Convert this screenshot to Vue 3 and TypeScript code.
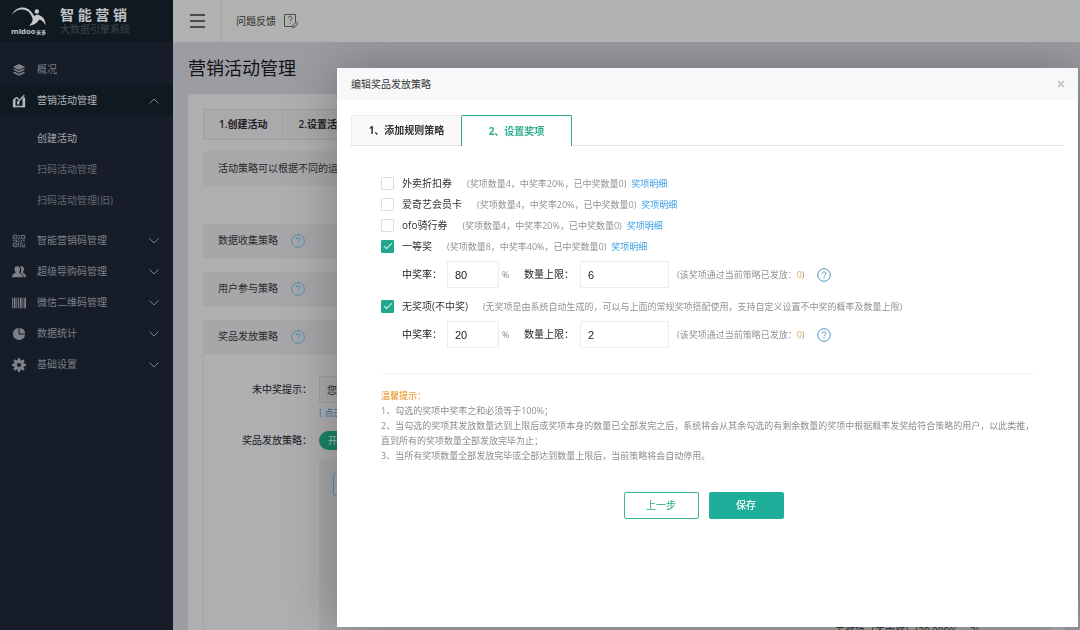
<script setup lang="ts">
import { ref } from 'vue'

interface MenuItem {
  label: string
  icon: string
  active?: boolean
  children?: string[]
}

interface Prize {
  id: string
  name: string
  note: string
  detail: boolean
  checked: boolean
  rate?: string
  limit?: string
}

const menu: MenuItem[] = [
  { label: '概况', icon: 'layers' },
  {
    label: '营销活动管理',
    icon: 'chart',
    active: true,
    children: ['创建活动', '扫码活动管理', '扫码活动管理(旧)'],
  },
  { label: '智能营销码管理', icon: 'qr', children: [] },
  { label: '超级导购码管理', icon: 'users', children: [] },
  { label: '微信二维码管理', icon: 'barcode', children: [] },
  { label: '数据统计', icon: 'pie', children: [] },
  { label: '基础设置', icon: 'gear', children: [] },
]

const prizes = ref<Prize[]>([
  { id: 'p1', name: '外卖折扣券', note: '(奖项数量4，中奖率20%，已中奖数量0)', detail: true, checked: false },
  { id: 'p2', name: '爱奇艺会员卡', note: '(奖项数量4，中奖率20%，已中奖数量0)', detail: true, checked: false },
  { id: 'p3', name: 'ofo骑行券', note: '(奖项数量4，中奖率20%，已中奖数量0)', detail: true, checked: false },
  { id: 'p4', name: '一等奖', note: '(奖项数量8，中奖率40%，已中奖数量0)', detail: true, checked: true, rate: '80', limit: '6' },
  {
    id: 'p5',
    name: '无奖项(不中奖)',
    note: '(无奖项是由系统自动生成的，可以与上面的常规奖项搭配使用，支持自定义设置不中奖的概率及数量上限)',
    detail: false,
    checked: true,
    rate: '20',
    limit: '2',
  },
])

const tips: string[] = [
  '1、勾选的奖项中奖率之和必须等于100%；',
  '2、当勾选的奖项其发放数量达到上限后或奖项本身的数量已全部发完之后，系统将会从其余勾选的有剩余数量的奖项中根据概率发奖给符合策略的用户，以此类推，直到所有的奖项数量全部发放完毕为止；',
  '3、当所有奖项数量全部发放完毕或全部达到数量上限后，当前策略将会自动停用。',
]

const missText = ref('您没有中奖')
</script>

<template>
  <div class="app">
    <aside class="sidebar">
      <div class="brand">
        <svg class="logo" viewBox="0 0 38 30" role="img" aria-label="midoo">
          <path d="M1 8.500C3.500 3.500 8 .9 12.500 1.200 18.500 1.600 21.500 6 24 10c1.300-1.300 3.200-1.700 5.200-.9 4 1.500 6.500 5.500 6.300 10.400-1.500-3-3.800-5.300-6.500-6-1.800 3.500-5.500 6-10.500 6.300 2.500-2 3.900-4.300 3.700-7C20.500 7 17 3.500 11.500 3.300 7.500 3.200 4 5 1 8.500z" fill="#c6c9cc" />
          <circle cx="26.500" cy="5.200" r="2.300" fill="#c6c9cc" />
          <text x="0" y="28" class="logo-en">midoo</text>
          <text x="26" y="28" class="logo-cn">米多</text>
        </svg>
        <div class="brand-text">
          <strong>智 能 营 销</strong>
          <span>大数据引擎系统</span>
        </div>
      </div>
      <nav class="menu">
        <template v-for="item in menu" :key="item.label">
          <a href="#" class="menu-item" :class="{ active: item.active }">
            <svg class="menu-icon" viewBox="0 0 16 16" fill="currentColor">
              <template v-if="item.icon === 'layers'">
                <path d="M8 1l7 3.500-7 3.500-7-3.500z" />
                <path d="M1 7.500l2-1 5 2.600 5-2.600 2 1L8 11z" />
                <path d="M1 11l2-1 5 2.600L13 10l2 1-7 3.700z" />
              </template>
              <template v-else-if="item.icon === 'chart'">
                <path d="M1 6.500l3-2.200V15H1zM5.800 8h2.700v4H5.800zM12 4h3v11h-3z" />
                <path d="M2.500 6L5.500 4l3 3.500L14 1.500M1.500 14.300h13" fill="none" stroke="currentColor" stroke-width="1.500" />
              </template>
              <template v-else-if="item.icon === 'qr'">
                <path d="M1.500 1.500h4v4h-4zM10.500 1.500h4v4h-4zM1.500 10.500h4v4h-4z" fill="none" stroke="currentColor" />
                <path d="M3 3h1v1H3zM12 3h1v1h-1zM3 12h1v1H3zM7 1h2v1H7zM8 3h1v2H8zM7 5h1v2H7zM1 7h2v1H1zM4 7h2v2H4zM7 8h2v1H7zM10 7h1v2h-1zM12 7h3v1h-3zM13 9h1v1h-1zM7 10h1v3H7zM9 10h3v1H9zM9 12h1v3H9zM11 12h2v1h-2zM14 11h1v2h-1zM11 14h4v1h-4zM7 14h1v1H7z" />
              </template>
              <template v-else-if="item.icon === 'users'">
                <path d="M6 1.500c2.200 0 3.200 1.500 3.200 3.300S8 8 8 8.700c0 .9 4.300 1.300 4.300 5.300H0c0-4 4-4.400 4-5.300 0-.7-1.200-2.100-1.200-3.900S3.800 1.500 6 1.500z" />
                <path d="M9 1.800c3-1 4.700.7 4.700 3 0 1.800-1.200 3-1.200 3.700 0 .9 3.500 1.200 3.500 5.500h-2.700c-.2-3-1.800-4.200-3.600-5.200.8-1.700 1.600-5-.7-7z" />
              </template>
              <template v-else-if="item.icon === 'barcode'">
                <path d="M0 2h1v12H0zM2 2h2v12H2zM5 2h1v12H5zM7 2h1v12H7zM9 2h2v12H9zM12 2h1v12h-1zM14 2h2v12h-2z" />
              </template>
              <template v-else-if="item.icon === 'pie'">
                <path d="M7.500 1v7.500H15A7 7 0 1 1 7.500 1z" />
                <path d="M8.700 1A6.500 6.500 0 0 1 15 7.300H8.700z" />
              </template>
              <template v-else>
                <path fill-rule="evenodd" d="M6.800 0h2.400l.4 2.300 1.200.5 1.900-1.300 1.800 1.800-1.300 1.900.5 1.200 2.300.4v2.400l-2.300.4-.5 1.200 1.300 1.900-1.800 1.800-1.900-1.300-1.200.5-.4 2.300H6.800l-.4-2.300-1.200-.5-1.900 1.300-1.800-1.800 1.300-1.900-.5-1.200L0 9.200V6.800l2.300-.4.5-1.200-1.300-1.900 1.800-1.800 1.900 1.300 1.200-.5zM8 5.600a2.400 2.400 0 1 0 0 4.800 2.400 2.400 0 0 0 0-4.800z" />
              </template>
            </svg>
            <span>{{ item.label }}</span>
            <svg v-if="item.children" class="chevron" viewBox="0 0 10 6">
              <path :d="item.active ? 'M.5 5.500L5 1l4.500 4.500' : 'M.5 .5L5 5l4.500-4.500'" />
            </svg>
          </a>
          <div v-if="item.children && item.children.length" class="submenu">
            <a v-for="(child, i) in item.children" :key="child" href="#" :class="{ current: i === 0 }">{{ child }}</a>
          </div>
        </template>
      </nav>
    </aside>

    <div class="page">
      <header class="topbar">
        <button type="button" class="burger" aria-label="菜单"><i></i><i></i><i></i></button>
        <a href="#" class="feedback">
          问题反馈
          <svg viewBox="0 0 16 16" fill="none" stroke="#4b4c4b">
            <path d="M9 13.500H1.500v-12h11V9" />
            <path d="M5.200 5.200c0-2.300 3.800-2.200 3.800 0 0 1.400-1.900 1.400-1.900 3M7.100 9.600v1.200" />
            <path d="M10 12.500l3-3.500 1.800 1.500-3 3.500-2.200.8z" />
          </svg>
        </a>
      </header>
      <h1>营销活动管理</h1>
      <main class="card">
        <ol class="steps">
          <li>1.创建活动</li>
          <li>2.设置活动策略</li>
        </ol>
        <p class="notice">活动策略可以根据不同的运营需求进行设置</p>
        <section v-for="name in ['数据收集策略', '用户参与策略', '奖品发放策略']" :key="name" class="panel">
          <h2>
            {{ name }}
            <svg class="help" viewBox="0 0 14 14"><circle cx="7" cy="7" r="6.300" /><path d="M5.200 5.600c0-2.500 3.700-2.400 3.700 0 0 1.300-1.800 1.400-1.800 2.800M7.100 9.400v1.200" /></svg>
          </h2>
          <div v-if="name === '奖品发放策略'" class="panel-body">
            <label for="miss">未中奖提示：</label>
            <div>
              <input id="miss" v-model="missText" type="text" class="miss" />
              <a href="#" class="preview">[ 点击预览 ]</a>
            </div>
            <span class="row-label">奖品发放策略：</span>
            <button type="button" class="switch">开启</button>
            <div class="rules">
              <div class="rule"></div>
              <p>无奖项（不中奖）(20.000%， 2)</p>
            </div>
          </div>
        </section>
      </main>
    </div>

    <div class="dialog" role="dialog" aria-labelledby="dialog-title">
      <header class="dialog-head">
        <h2 id="dialog-title">编辑奖品发放策略</h2>
        <button type="button" class="close" aria-label="关闭">
          <svg viewBox="0 0 8 8"><path d="M1 1l6 6M7 1L1 7" /></svg>
        </button>
      </header>
      <div class="tabs" role="tablist">
        <button type="button" role="tab" aria-selected="false">1、添加规则策略</button>
        <button type="button" role="tab" aria-selected="true" class="selected">2、设置奖项</button>
      </div>
      <form class="form" @submit.prevent>
        <div v-for="p in prizes" :key="p.id" class="prize">
          <div class="prize-line">
            <input :id="p.id" v-model="p.checked" type="checkbox" />
            <label :for="p.id">{{ p.name }}</label>
            <span class="note">{{ p.note }}</span>
            <a v-if="p.detail" href="#">奖项明细</a>
          </div>
          <div v-if="p.rate" class="fields">
            <label :for="p.id + '-rate'">中奖率：</label>
            <input :id="p.id + '-rate'" v-model="p.rate" type="text" class="rate" />
            <span class="percent">%</span>
            <label :for="p.id + '-limit'" class="limit-label">数量上限：</label>
            <input :id="p.id + '-limit'" v-model="p.limit" type="text" class="limit" />
            <span class="sent">(该奖项通过当前策略已发放：<em>0</em>)</span>
            <svg class="help" viewBox="0 0 14 14"><circle cx="7" cy="7" r="6.300" /><path d="M5.200 5.600c0-2.500 3.700-2.400 3.700 0 0 1.300-1.800 1.400-1.800 2.800M7.100 9.400v1.200" /></svg>
          </div>
        </div>
        <div class="tips">
          <strong>温馨提示：</strong>
          <p v-for="tip in tips" :key="tip">{{ tip }}</p>
        </div>
        <div class="actions">
          <button type="button">上一步</button>
          <button type="submit" class="primary">保存</button>
        </div>
      </form>
    </div>
  </div>
</template>

<style>
body {
  margin: 0;
  overflow: hidden;
}
</style>

<style scoped>
.app {
  display: flex;
  height: 100vh;
  overflow: hidden;
  background: #9c9ca3;
  color: #29292b;
  font: 10px/15px "Open Sans", "Noto Sans CJK SC", sans-serif;
}
.app * {
  box-sizing: border-box;
}
h1, h2, p, ol {
  margin: 0;
  padding: 0;
  font-weight: 400;
}
a {
  text-decoration: none;
}
button, input {
  margin: 0;
  font: inherit;
}
svg {
  flex: none;
}

.sidebar {
  position: relative;
  z-index: 2;
  flex: none;
  width: 173px;
  background: #171d28;
}
.brand {
  display: flex;
  align-items: center;
  gap: 12px;
  height: 42px;
  padding-left: 11px;
  background: #101920;
}
.logo {
  width: 37px;
  height: 30px;
}
.logo-en {
  fill: #c6c9cc;
  font: bold 8px "Open Sans", sans-serif;
}
.logo-cn {
  fill: #c6c9cc;
  font: bold 5px "Noto Sans CJK SC", sans-serif;
}
.brand-text strong,
.brand-text span {
  display: block;
  white-space: nowrap;
}
.brand-text strong {
  color: #c0c4c7;
  font-size: 14px;
  line-height: 16px;
}
.brand-text span {
  color: #3a434a;
  line-height: 13px;
}
.menu {
  padding-top: 12px;
}
.menu-item {
  display: flex;
  align-items: center;
  height: 31px;
  padding: 0 14px 0 12px;
  color: #7c8087;
}
.menu-item.active {
  background: #101821;
  color: #b3b6ba;
}
.menu-icon {
  width: 14px;
  height: 14px;
  margin-right: 11px;
}
.chevron {
  width: 10px;
  height: 6px;
  margin-left: auto;
  fill: none;
  stroke: #7c8087;
}
.submenu {
  padding: 7px 0 9px 37px;
}
.submenu a {
  display: block;
  color: #62676f;
  line-height: 31px;
}
.submenu .current {
  color: #a6a9ae;
}

.page {
  flex: 1;
  min-width: 0;
}
.topbar {
  position: relative;
  z-index: 2;
  display: flex;
  height: 42px;
  background: #b0b2af;
}
.burger {
  display: flex;
  flex-direction: column;
  justify-content: center;
  gap: 4px;
  width: 49px;
  padding: 0 16px 0 17px;
  border: 0;
  border-right: 1px solid #a5a7a5;
  background: none;
}
.burger i {
  height: 2px;
  background: #4a4b4a;
}
.feedback {
  display: flex;
  align-items: center;
  gap: 7px;
  padding-left: 14px;
  color: #2c2d2d;
}
.feedback svg {
  width: 16px;
  height: 16px;
}
h1 {
  padding: 13px 15px;
  color: #111113;
  font-size: 18px;
  line-height: 26px;
}
.card {
  height: 100%;
  margin: 0 15px;
  padding: 15px;
  border-radius: 3px;
  background: #afafb1;
}
.steps {
  display: flex;
  height: 31px;
  border: 1px solid #a0a0a2;
  background: #aaaaac;
  color: #202022;
  line-height: 29px;
  list-style: none;
}
.steps li {
  padding: 0 15px;
  border-right: 1px solid #a0a0a2;
  font-weight: 600;
}
.notice {
  margin: 11px 0 38px;
  padding: 0 15px;
  background: #a8a8aa;
  line-height: 35px;
}
.panel {
  margin-bottom: 14px;
}
.panel h2 {
  display: flex;
  align-items: center;
  gap: 13px;
  height: 34px;
  padding: 0 15px;
  border-bottom: 1px solid #a2a2a4;
  background: #a7a7a9;
  font-size: 10px;
}
.help {
  width: 14px;
  height: 14px;
  fill: none;
  stroke: #4a8fb8;
}
.panel-body {
  display: grid;
  grid-template-columns: 108px 1fr;
  column-gap: 7px;
  align-items: start;
  height: 400px;
  padding-top: 22px;
  border-left: 1px solid #a2a2a4;
}
.panel-body label,
.row-label {
  color: #161618;
  line-height: 27px;
  text-align: right;
}
.row-label {
  line-height: 19px;
}
.miss {
  display: block;
  width: 260px;
  height: 27px;
  padding: 0 7px;
  border: 1px solid #a0a0a2;
  background: #ababad;
  color: #29292b;
}
.preview {
  display: block;
  margin: 2px 0 11px;
  color: #396f9c;
  font-size: 9px;
}
.switch {
  width: 48px;
  height: 19px;
  padding: 0 0 0 9px;
  border: 0;
  border-radius: 10px;
  background: #1b8369;
  color: #a9c7be;
  font-size: 9px;
  text-align: left;
}
.rules {
  grid-column: 2;
  height: 300px;
  margin-top: 9px;
  padding: 14px;
  background: #a8a8aa;
}
.rule {
  height: 23px;
  border: 1px solid #5093bb;
  border-radius: 2px;
}
.rules p {
  padding: 128px 0 0 502px;
}

.dialog {
  position: fixed;
  inset: 68px 2px 3px 337px;
  z-index: 1;
  overflow: auto;
  background: #fff;
  box-shadow: 1px 1px 50px rgba(0, 0, 0, 0.3);
}
.dialog-head {
  display: flex;
  align-items: center;
  justify-content: space-between;
  height: 32px;
  padding: 0 13px 0 14px;
  background: #f7f8fa;
}
.dialog-head h2 {
  color: #333;
  font-size: 10px;
}
.close {
  display: flex;
  padding: 0;
  border: 0;
  background: none;
}
.close svg {
  width: 8px;
  height: 8px;
  stroke: #bcbcbf;
  stroke-width: 1.500;
}
.tabs {
  display: flex;
  margin: 15px 14px 0;
  border-bottom: 1px solid #e4e6e8;
}
.tabs button {
  width: 110px;
  height: 30px;
  padding: 0;
  border: 1px solid #ececf0;
  border-width: 1px 0 0 1px;
  background: #f9f9fb;
  color: #333;
  font-weight: 700;
}
.tabs .selected {
  width: 111px;
  height: 31px;
  margin-bottom: -1px;
  border: 1px solid #2fa88c;
  border-bottom: 0;
  border-radius: 2px 2px 0 0;
  background: #fff;
  color: #2fac90;
}
.form {
  padding: 27px 43px 29px 44px;
}
.prize-line {
  display: flex;
  align-items: center;
  height: 21px;
  white-space: nowrap;
}
.prize-line input {
  display: grid;
  place-items: center;
  width: 13px;
  height: 13px;
  border: 1px solid #dcdce2;
  border-radius: 1px;
  background: #fff;
  appearance: none;
}
.prize-line input:checked {
  border-color: #22a68e;
  background: #22a68e;
}
.prize-line input:checked::after {
  width: 7px;
  height: 3px;
  margin-bottom: 3px;
  border: solid #d6fff6;
  border-width: 0 0 1px 1px;
  content: "";
  transform: rotate(-45deg);
}
.prize-line label {
  margin: 0 15px 0 8px;
  color: #333;
}
.note {
  color: #929296;
  font-size: 9px;
}
.prize-line a {
  margin-left: 5px;
  color: #3a9fe8;
  font-size: 9px;
}
.fields {
  display: flex;
  align-items: center;
  margin: 4px 0 8px 21px;
}
.fields label {
  width: 45px;
  color: #222;
}
.fields .limit-label {
  width: 56px;
  margin-left: 13px;
}
.fields input {
  width: 52px;
  height: 27px;
  padding: 0 7px;
  border: 1px solid #ebebf1;
  border-radius: 1px;
  background: #fff;
  color: #222;
  font: 11px "Liberation Sans", sans-serif;
}
.fields .limit {
  width: 89px;
}
.percent {
  width: 9px;
  margin-left: 3px;
  color: #8a8a8e;
  font-size: 9px;
}
.sent {
  margin: 0 13px 0 8px;
  color: #929296;
  font-size: 9px;
}
.sent em {
  color: #e0a94b;
  font-style: normal;
}
.tips {
  margin-top: 25px;
  padding-top: 14px;
  border-top: 1px solid #f3f2f6;
  color: #8c8c90;
  font-size: 9px;
}
.tips strong {
  display: block;
  color: #eca23e;
  font-weight: 500;
}
.actions {
  display: flex;
  justify-content: center;
  gap: 10px;
  margin-top: 29px;
  padding-right: 9px;
}
.actions button {
  width: 75px;
  height: 27px;
  padding: 0;
  border: 1px solid #3cb498;
  border-radius: 2px;
  background: #fff;
  color: #2aa78b;
}
.actions .primary {
  border-color: #1fae99;
  background: #1fae99;
  color: #fff;
  font-weight: 500;
}
</style>
